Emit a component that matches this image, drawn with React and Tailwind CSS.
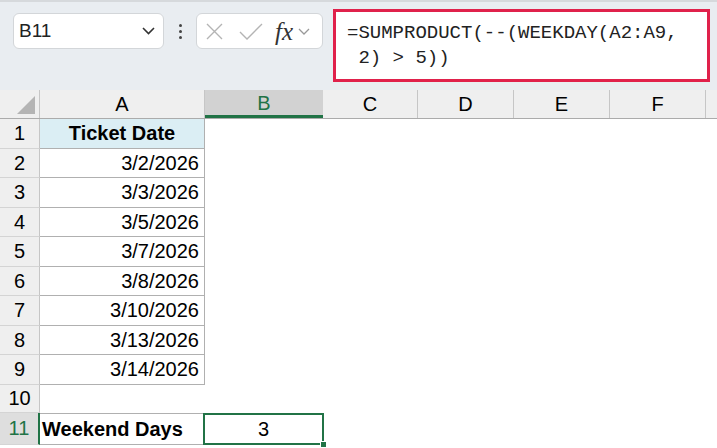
import React from 'react';

const dates = ['3/2/2026', '3/3/2026', '3/5/2026', '3/7/2026', '3/8/2026', '3/10/2026', '3/13/2026', '3/14/2026'];
const restCols = [
  { key: 'C', w: 'w-[95px]' },
  { key: 'D', w: 'w-[96px]' },
  { key: 'E', w: 'w-[96px]' },
  { key: 'F', w: 'w-[96px]' },
];

const RowHead = ({ n, active }) => (
  <div
    className={`w-[40px] shrink-0 flex items-center justify-center border-b border-[#d4d4d4] ${
      active
        ? 'bg-[#dedede] text-[#217346] border-r-2 border-r-[#217346]'
        : 'bg-[#efefef] text-black border-r border-r-[#c6c6c6]'
    }`}
  >
    {n}
  </div>
);

const Toolbar = () => (
  <div className="h-[90px] bg-[#e9edf1] border-t-2 border-[#d6d9dc] flex items-start pl-[13px] pt-[11px]">
    <div className="w-[151px] h-[36px] bg-white rounded-md border border-[#d3d6d9] flex items-center justify-between pl-[5px] pr-[8px]">
      <span className="text-[19px] text-[#222]">B11</span>
      <svg width="13" height="8" viewBox="0 0 13 8" fill="none" stroke="#333" strokeWidth="1.6">
        <path d="M1 1l5.5 5.5L12 1" />
      </svg>
    </div>
    <div className="w-[32px] h-[36px] flex flex-col items-center justify-center gap-[3px]">
      <span className="w-[3px] h-[3px] bg-[#444] rounded-full" />
      <span className="w-[3px] h-[3px] bg-[#444] rounded-full" />
      <span className="w-[3px] h-[3px] bg-[#444] rounded-full" />
    </div>
    <div className="w-[127px] h-[36px] bg-white rounded-md border border-[#d3d6d9] flex items-center pl-[9px]">
      <svg width="17" height="17" viewBox="0 0 17 17" stroke="#b4b4b4" strokeWidth="1.4">
        <path d="M1 1l15 15M16 1L1 16" />
      </svg>
      <svg className="ml-[16px]" width="24" height="17" viewBox="0 0 24 17" fill="none" stroke="#b4b4b4" strokeWidth="1.4">
        <path d="M1 9l7 7L23 1" />
      </svg>
      <span className="ml-[12px] text-[25px] italic text-[#333] leading-none" style={{ fontFamily: '"Liberation Serif", serif' }}>
        fx
      </span>
      <svg className="ml-[5px]" width="12" height="7" viewBox="0 0 12 7" fill="none" stroke="#999" strokeWidth="1.3">
        <path d="M1 1l5 5 5-5" />
      </svg>
    </div>
    <div className="ml-[10px] -mt-[4px] w-[377px] h-[73px] bg-white border-[3px] border-[#e0214b] pl-[11px] pt-[9px] text-[19px] leading-[25px] text-[#222] whitespace-pre" style={{ fontFamily: '"Liberation Mono", monospace' }}>
      {'=SUMPRODUCT(--(WEEKDAY(A2:A9,\n 2) > 5))'}
    </div>
  </div>
);

export default function App() {
  return (
    <div className="w-[717px] h-[448px] overflow-hidden bg-white text-[20px]" style={{ fontFamily: '"Liberation Sans", Arial, sans-serif' }}>
      <Toolbar />

      {/* column headers */}
      <div className="flex h-[29px] bg-[#efefef] border-b border-[#ababab]">
        <div className="w-[40px] shrink-0 border-r border-[#c6c6c6] relative">
          <svg className="absolute left-[17px] top-[6px]" width="18" height="18" viewBox="0 0 18 18">
            <path d="M18 0V18H0Z" fill="#b4b4b4" />
          </svg>
        </div>
        <div className="w-[165px] shrink-0 border-r border-[#c6c6c6] flex items-center justify-center">A</div>
        <div className="w-[118px] shrink-0 bg-[#d2d2d2] text-[#217346] border-b-[3px] border-[#217346] flex items-center justify-center">B</div>
        {restCols.map(c => (
          <div key={c.key} className={`${c.w} shrink-0 border-r border-[#c6c6c6] flex items-center justify-center`}>{c.key}</div>
        ))}
        <div className="flex-1" />
      </div>

      {/* row 1 */}
      <div className="flex h-[29.5px]">
        <RowHead n={1} />
        <div className="w-[165px] shrink-0 bg-[#dbeef4] border-r border-b border-[#b0b0b0] flex items-center justify-center font-bold">
          Ticket Date
        </div>
      </div>

      {dates.map((d, i) => (
        <div key={d} className="flex h-[29.5px]">
          <RowHead n={i + 2} />
          <div className="w-[165px] shrink-0 border-r border-b border-[#b0b0b0] flex items-center justify-end pr-[5px]">
            {d}
          </div>
        </div>
      ))}

      <div className="flex h-[28px]">
        <RowHead n={10} />
      </div>

      {/* row 11 with the selected cell */}
      <div className="flex h-[32px]">
        <RowHead n={11} active />
        <div className="w-[163px] shrink-0 border-t border-b border-[#b0b0b0] flex items-center pl-[2px] font-bold">
          Weekend Days
        </div>
        <div className="w-[121px] shrink-0 border-2 border-[#217346] flex items-center justify-center relative">
          3
          <span className="absolute -right-[5px] -bottom-[5px] w-[7px] h-[7px] bg-[#217346] border border-white" />
        </div>
      </div>
    </div>
  );
}
